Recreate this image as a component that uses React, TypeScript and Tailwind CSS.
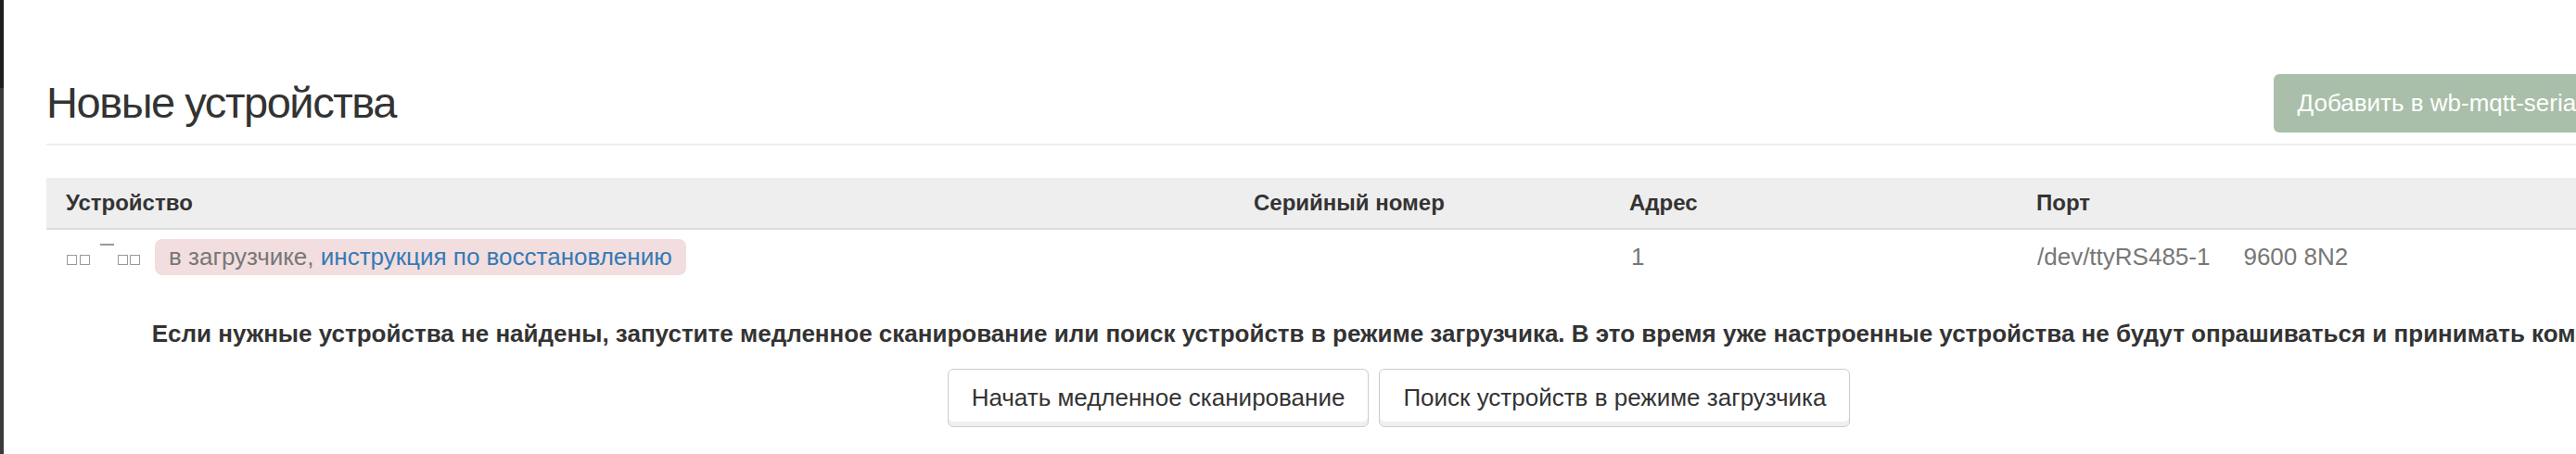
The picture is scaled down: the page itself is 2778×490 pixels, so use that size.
import React from "react";

const font = { fontFamily: '"Liberation Sans", Arial, Helvetica, sans-serif' };

export default function App() {
  const box = "block w-[11px] h-[11px] border border-[#9a9a9a] shrink-0";
  return (
    <div
      className="w-[2778px] h-[490px] overflow-hidden bg-white flex text-[#333]"
      style={font}
    >
      <div className="w-[4px] shrink-0 flex flex-col">
        <div className="h-[95px] bg-[#1e1e1e]" />
        <div className="flex-1 bg-[#3a3a3a]" />
      </div>
      <div className="pl-[46px] shrink-0">
        <div className="w-[2917px]">
          {/* Title row */}
          <div className="w-[2760px] flex items-start pt-[80px] pb-[12px] border-b-2 border-[#eeeeee]">
            <h1 className="mt-[5px] text-[47px] leading-[52px] tracking-[-1.45px] font-normal text-[#333]">
              Новые устройства
            </h1>
            <button className="ml-auto h-[63px] px-[26px] rounded-[6px] bg-[#a9bfa9] text-white text-[26px] whitespace-nowrap">
              Добавить в wb-mqtt-serial
            </button>
          </div>

          {/* Table */}
          <div className="mt-[35px]">
            <div className="grid grid-cols-[1282px_405px_439px_1fr] h-[56px] items-center bg-[#eeeeee] border-b-2 border-[#dddddd] text-[24px] font-bold text-[#333]">
              <div className="pl-[21px]">Устройство</div>
              <div className="pl-[20px]">Серийный номер</div>
              <div className="pl-[20px]">Адрес</div>
              <div className="pl-[20px]">Порт</div>
            </div>
            <div className="grid grid-cols-[1282px_405px_439px_1fr] h-[59px] items-center text-[26px] text-[#777]">
              <div className="pl-[22px] flex items-center">
                <div className="flex items-end h-[23px] mb-[6px]">
                  <span className={box} />
                  <span className={box + " ml-[3px]"} />
                  <span className="block shrink-0 ml-[11px] mb-[21px] w-[15px] h-[2px] bg-[#9a9a9a]" />
                  <span className={box + " ml-[4px]"} />
                  <span className={box + " ml-[2px]"} />
                </div>
                <span className="ml-[16px] h-[39px] flex items-center px-[15px] rounded-[8px] bg-[#f2dede] text-[#777] whitespace-nowrap">
                  в загрузчике,&nbsp;<a className="text-[#337ab7]">инструкция по восстановлению</a>
                </span>
              </div>
              <div />
              <div className="pl-[22px]">1</div>
              <div className="pl-[21px] flex whitespace-nowrap">
                <span>/dev/ttyRS485-1</span>
                <span className="ml-[36px]">9600 8N2</span>
              </div>
            </div>
          </div>

          {/* Bottom */}
          <div className="flex flex-col items-center">
            <p className="mt-[35px] text-[26px] leading-[36px] font-bold text-[#333] whitespace-nowrap">
              Если нужные устройства не найдены, запустите медленное сканирование или поиск устройств в режиме загрузчика. В это время уже настроенные устройства не будут опрашиваться и принимать команды.
            </p>
            <div className="mt-[20px] flex gap-[11px]">
              <button className="h-[63px] px-[25px] rounded-[6px] border border-[#cccccc] bg-white shadow-[inset_0_-5px_0_#efefef] text-[26px] text-[#333] whitespace-nowrap">
                Начать медленное сканирование
              </button>
              <button className="h-[63px] px-[25px] rounded-[6px] border border-[#cccccc] bg-white shadow-[inset_0_-5px_0_#efefef] text-[26px] text-[#333] whitespace-nowrap">
                Поиск устройств в режиме загрузчика
              </button>
            </div>
          </div>
        </div>
      </div>
    </div>
  );
}
